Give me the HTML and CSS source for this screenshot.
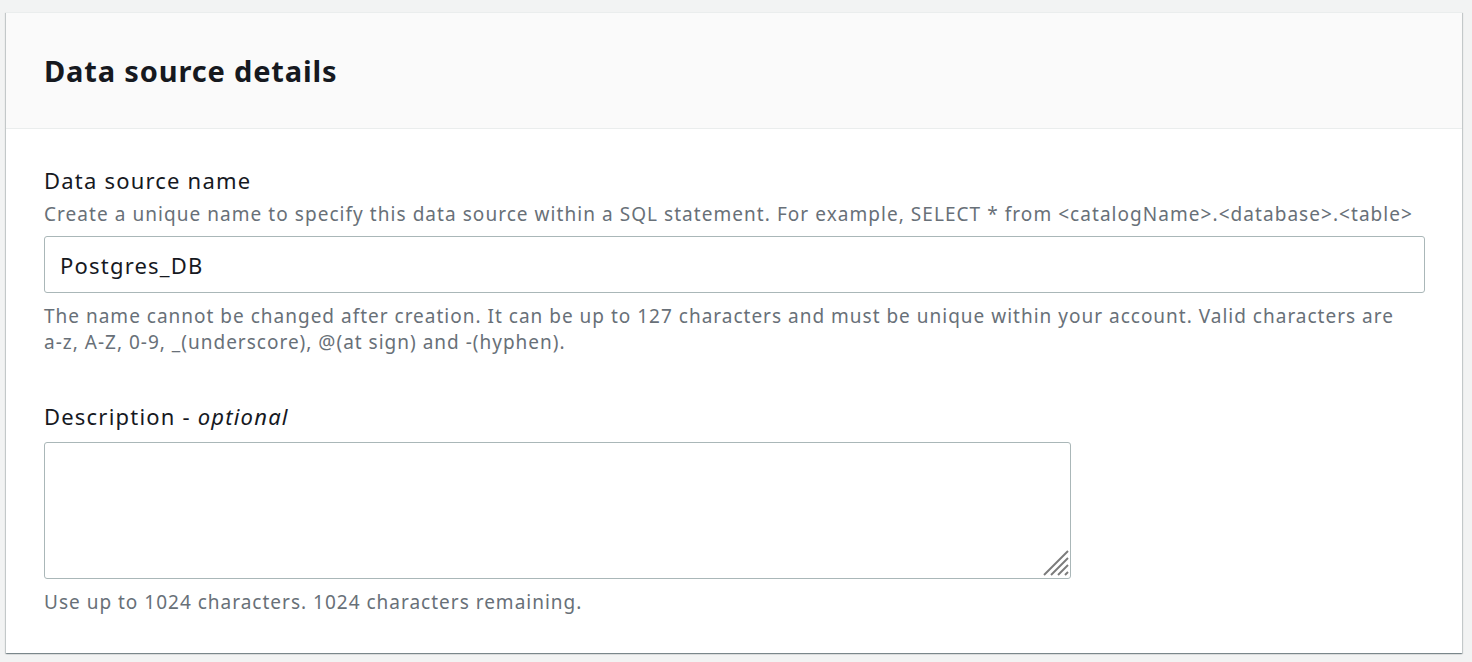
FILE: index.html
```html
<!DOCTYPE html>
<html lang="en">
<head>
<meta charset="utf-8">
<title>Data source details</title>
<link rel="stylesheet" href="styles.css">
</head>
<body>
<div class="card">
  <div class="card-header">
    <h2 class="card-title">Data source details</h2>
  </div>
  <div class="card-body">
    <div class="field">
      <label class="field-label" for="ds-name">Data source name</label>
      <div class="field-desc">Create a unique name to specify this data source within a SQL statement. For example, SELECT * from &lt;catalogName&gt;.&lt;database&gt;.&lt;table&gt;</div>
      <input class="text-input" id="ds-name" type="text" value="Postgres_DB">
      <div class="field-constraint">The name cannot be changed after creation. It can be up to 127 characters and must be unique within your account. Valid characters are <span class="nowrap">a-z,</span> <span class="nowrap">A-Z,</span> <span class="nowrap">0-9,</span> _(underscore), @(at sign) and <span class="nowrap">-(hyphen).</span></div>
    </div>
    <div class="field field-second">
      <label class="field-label" for="ds-desc">Description - <i>optional</i></label>
      <div class="area-wrap">
        <textarea class="text-area" id="ds-desc"></textarea>
        <svg class="resize-grip" width="26" height="26" viewBox="0 0 26 26" aria-hidden="true">
          <line x1="1" y1="25" x2="25" y2="1"/>
          <line x1="8" y1="25" x2="25" y2="8"/>
          <line x1="15" y1="25" x2="25" y2="15"/>
          <line x1="22" y1="25" x2="25" y2="22"/>
        </svg>
      </div>
      <div class="field-constraint">Use up to 1024 characters. 1024 characters remaining.</div>
    </div>
  </div>
</div>
</body>
</html>
```
FILE: styles.css
```css
html, body {
  margin: 0;
  padding: 0;
}
body {
  background: #f2f3f3;
  font-family: "Noto Sans", "Open Sans", sans-serif;
  color: #16191f;
  padding: 12px 10px 10px 6px;
}
.card {
  background: #ffffff;
  box-shadow: 0 1px 1px 0 rgba(0, 28, 36, 0.3), 1px 1px 1px 0 rgba(0, 28, 36, 0.15), -1px 1px 1px 0 rgba(0, 28, 36, 0.15);
  border-top: 1px solid #eaeded;
}
.card-header {
  background: #fafafa;
  border-bottom: 1px solid #eaeded;
  height: 116px;
  padding: 0 38px;
  display: flex;
  align-items: center;
  box-sizing: border-box;
}
.card-title {
  margin: 0;
  font-size: 29px;
  font-weight: 700;
  line-height: 34px;
  letter-spacing: 0.85px;
  color: #16191f;
}
.card-body {
  padding: 37px 37px 38px 38px;
}
.field {
  display: flex;
  flex-direction: column;
  align-items: flex-start;
}
.field-second {
  margin-top: 47px;
}
.field-label {
  font-size: 22px;
  line-height: 28px;
  letter-spacing: 1.2px;
  color: #16191f;
}
.field-desc {
  font-size: 19px;
  line-height: 24px;
  letter-spacing: 1.05px;
  color: #687078;
  margin-top: 8px;
}
.field-constraint {
  font-size: 19px;
  line-height: 26px;
  letter-spacing: 1px;
  color: #687078;
  margin-top: 10px;
}
.nowrap {
  white-space: nowrap;
}
.text-input {
  margin-top: 10px;
  width: 100%;
  height: 57px;
  box-sizing: border-box;
  border: 1px solid #aab7b8;
  border-radius: 3px;
  padding: 0 15px;
  font-family: inherit;
  font-size: 22px;
  letter-spacing: 1.2px;
  color: #16191f;
  background: #fff;
  outline: none;
}
.area-wrap {
  position: relative;
  margin-top: 12px;
  width: 1027px;
  height: 137px;
}
.text-area {
  display: block;
  width: 100%;
  height: 100%;
  box-sizing: border-box;
  border: 1px solid #aab7b8;
  border-radius: 3px;
  padding: 8px 15px;
  font-family: inherit;
  font-size: 22px;
  background: #fff;
  outline: none;
  resize: none;
}
.resize-grip {
  position: absolute;
  right: 2px;
  bottom: 3px;
  stroke: #7b7b7b;
  stroke-width: 2;
}
```
